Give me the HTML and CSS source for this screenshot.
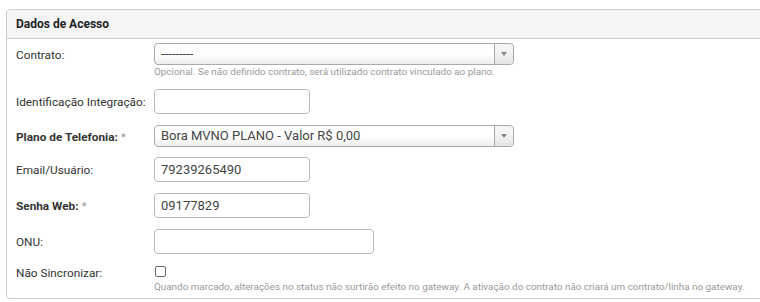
FILE: index.html
```html
<!DOCTYPE html>
<html lang="pt-BR">
<head>
  <meta charset="UTF-8">
  <title>Dados de Acesso</title>
  <link rel="stylesheet" href="styles.css">
</head>
<body>

  <div class="panel">
    <div class="panel-heading">Dados de Acesso</div>

    <div class="panel-body">
      <div class="row row-select">
        <label class="label">Contrato:</label>
        <div class="field">
          <div class="select">
            <span class="select-text">---------</span>
            <span class="select-arrow"><b></b></span>
          </div>
          <p class="help">Opcional. Se não definido contrato, será utilizado contrato vinculado ao plano.</p>
        </div>
      </div>

      <div class="row">
        <label class="label">Identificação Integração:</label>
        <div class="field">
          <input class="input" type="text" value="">
        </div>
      </div>

      <div class="row row-select row-tight">
        <label class="label required">Plano de Telefonia: <span class="star">*</span></label>
        <div class="field">
          <div class="select">
            <span class="select-text">Bora MVNO PLANO - Valor R$ 0,00</span>
            <span class="select-arrow"><b></b></span>
          </div>
        </div>
      </div>

      <div class="row">
        <label class="label">Email/Usuário:</label>
        <div class="field">
          <input class="input" type="text" value="79239265490">
        </div>
      </div>

      <div class="row">
        <label class="label required">Senha Web: <span class="star">*</span></label>
        <div class="field">
          <input class="input" type="text" value="09177829">
        </div>
      </div>

      <div class="row row-wide">
        <label class="label">ONU:</label>
        <div class="field">
          <input class="input input-wide" type="text" value="">
        </div>
      </div>

      <div class="row row-check">
        <label class="label">Não Sincronizar:</label>
        <div class="field">
          <input class="check" type="checkbox">
          <p class="help help-check">Quando marcado, alterações no status não surtirão efeito no gateway. A ativação do contrato não criará um contrato/linha no gateway.</p>
        </div>
      </div>
    </div>
  </div>

</body>
</html>
```

FILE: styles.css
```css
* {
  box-sizing: border-box;
}

body {
  margin: 0;
  padding: 9px 0 0 6px;
  font-family: Roboto, 'Liberation Sans', Arial, sans-serif;
  font-size: 12px;
  color: #333;
  background: #fff;
  overflow: hidden;
}

.panel {
  border: 1px solid #ccc;
  border-radius: 4px;
  margin-right: -20px;
}

.panel-heading {
  height: 29px;
  line-height: 28px;
  padding: 0 9px;
  background: #f5f5f5;
  border-bottom: 1px solid #ccc;
  border-radius: 3px 3px 0 0;
  font-weight: bold;
  color: #222;
}

.panel-body {
  padding: 4px 0 5px 9px;
}

.row {
  display: flex;
  align-items: flex-start;
  margin-bottom: 10px;
}

.row-select {
  margin-bottom: 11px;
}

.row-tight {
  margin-bottom: 9px;
}

.row-wide {
  margin-bottom: 11px;
}

.row-check {
  margin-bottom: 0;
}

.label {
  width: 138px;
  flex-shrink: 0;
  font-size: 11.8px;
  line-height: 25px;
  padding-top: 1px;
}

.row-select .label {
  line-height: 22px;
}

.row-check .label {
  line-height: 12px;
  padding-top: 1px;
}

.required {
  font-weight: bold;
}

.star {
  font-weight: normal;
  color: #999;
}

.field {
  flex: 1;
}

.select {
  display: flex;
  width: 360px;
  height: 22px;
  border: 1px solid #aaa;
  border-radius: 4px;
  background: linear-gradient(to top, #eee 0%, #fff 50%);
  font-size: 13px;
  color: #444;
}

.select-text {
  flex: 1;
  padding-left: 6px;
  line-height: 20px;
}

.select-arrow {
  width: 19px;
  border-left: 1px solid #aaa;
  border-radius: 0 4px 4px 0;
  background: linear-gradient(to top, #e4e4e4 0%, #f4f4f4 60%);
  display: flex;
  align-items: center;
  justify-content: center;
}

.select-arrow b {
  width: 0;
  height: 0;
  border-left: 3px solid transparent;
  border-right: 3px solid transparent;
  border-top: 4px solid #888;
}

.input {
  display: block;
  width: 156px;
  height: 25px;
  margin: 0;
  padding: 0 6px;
  border: 1px solid #bbb;
  border-radius: 4px;
  font-family: Roboto, 'Liberation Sans', Arial, sans-serif;
  font-size: 13px;
  color: #444;
}

.input-wide {
  width: 220px;
}

.check {
  -webkit-appearance: none;
  appearance: none;
  display: block;
  width: 11px;
  height: 11px;
  margin: 0 0 0 1px;
  border: 1px solid #666;
  border-radius: 2px;
  background: #fff;
}

.help {
  margin: 1px 0 0;
  font-size: 9.9px;
  line-height: 12px;
  color: #999;
}

.help-check {
  margin-top: 4px;
}
```
